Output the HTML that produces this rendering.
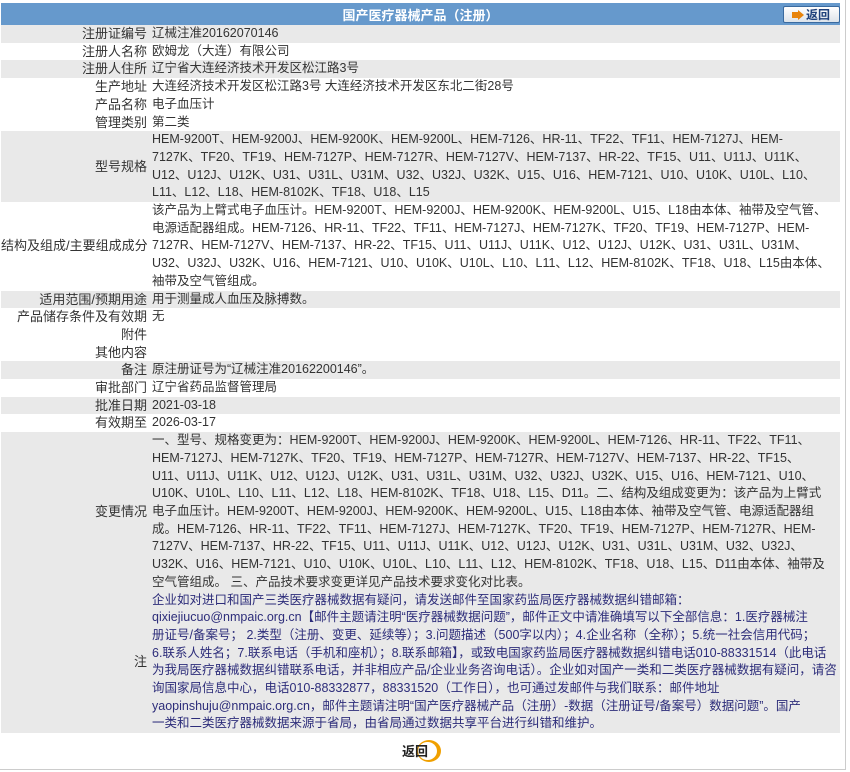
<!DOCTYPE html>
<html><head><meta charset="utf-8"><style>
body{margin:0;background:#fff;width:850px;height:772px;overflow:hidden;position:relative;font-family:"Liberation Sans","Noto Sans CJK SC",sans-serif;font-size:12.5px;color:#333}
.frame{position:absolute;left:0;top:0;width:845px;height:769px;border-right:1px solid #ccc;border-bottom:1px solid #ccc}
table{position:absolute;left:1px;top:3px;width:839px;border-collapse:collapse;table-layout:fixed}
th{background:#6699cc;color:#fff;height:22px;font-size:13px;font-weight:bold;position:relative;padding:0}
td{padding:0;line-height:17.7px;vertical-align:middle;white-space:nowrap;overflow:hidden}
td.l{text-align:right;padding-right:5px;font-size:13px}
tr.g td{background:#e9e9e9}
.n{color:#2d2d7a}
.btn{position:absolute;right:0;top:3px;width:57px;height:17px;border:1px solid #3a6a9f;border-radius:2px;background:linear-gradient(#fff,#dde3ea);color:#1d3f7a;font-size:12px;font-weight:bold;line-height:17px;text-align:right;padding-right:9px;box-sizing:border-box}
.btn:before{content:"";position:absolute;left:8px;top:5px;width:6px;height:6px;background:#e8840c}
.btn:after{content:"";position:absolute;left:14px;top:3px;border-left:6px solid #e8840c;border-top:5px solid transparent;border-bottom:5px solid transparent}
.ret{position:absolute;left:402px;top:741px;font-weight:bold;font-size:13px;color:#222}
.ret .c{position:absolute;left:15px;top:-1px;width:24px;height:22px;border-radius:50%;background:#f0a000}
.ret .c2{position:absolute;left:16px;top:1px;width:19px;height:18px;border-radius:50%;background:#fff}
.ret span{position:relative}
</style></head><body>
<div class="frame"></div>
<table>
<colgroup><col style="width:151px"><col style="width:688px"></colgroup>
<tr><th colspan="2">国产医疗器械产品（注册）<div class="btn">返回</div></th></tr>
<tr class="g"><td class="l">注册证编号</td><td>辽械注准20162070146</td></tr>
<tr><td class="l">注册人名称</td><td>欧姆龙（大连）有限公司</td></tr>
<tr class="g"><td class="l">注册人住所</td><td>辽宁省大连经济技术开发区松江路3号</td></tr>
<tr><td class="l">生产地址</td><td>大连经济技术开发区松江路3号 大连经济技术开发区东北二街28号</td></tr>
<tr><td class="l">产品名称</td><td>电子血压计</td></tr>
<tr><td class="l">管理类别</td><td>第二类</td></tr>
<tr class="g"><td class="l">型号规格</td><td>HEM-9200T、HEM-9200J、HEM-9200K、HEM-9200L、HEM-7126、HR-11、TF22、TF11、HEM-7127J、HEM-<br>7127K、TF20、TF19、HEM-7127P、HEM-7127R、HEM-7127V、HEM-7137、HR-22、TF15、U11、U11J、U11K、<br>U12、U12J、U12K、U31、U31L、U31M、U32、U32J、U32K、U15、U16、HEM-7121、U10、U10K、U10L、L10、<br>L11、L12、L18、HEM-8102K、TF18、U18、L15</td></tr>
<tr><td class="l">结构及组成/主要组成成分</td><td>该产品为上臂式电子血压计。HEM-9200T、HEM-9200J、HEM-9200K、HEM-9200L、U15、L18由本体、袖带及空气管、<br>电源适配器组成。HEM-7126、HR-11、TF22、TF11、HEM-7127J、HEM-7127K、TF20、TF19、HEM-7127P、HEM-<br>7127R、HEM-7127V、HEM-7137、HR-22、TF15、U11、U11J、U11K、U12、U12J、U12K、U31、U31L、U31M、<br>U32、U32J、U32K、U16、HEM-7121、U10、U10K、U10L、L10、L11、L12、HEM-8102K、TF18、U18、L15由本体、<br>袖带及空气管组成。</td></tr>
<tr class="g"><td class="l">适用范围/预期用途</td><td>用于测量成人血压及脉搏数。</td></tr>
<tr><td class="l">产品储存条件及有效期</td><td>无</td></tr>
<tr><td class="l">附件</td><td></td></tr>
<tr><td class="l">其他内容</td><td></td></tr>
<tr class="g"><td class="l">备注</td><td>原注册证号为“辽械注准20162200146”。</td></tr>
<tr><td class="l">审批部门</td><td>辽宁省药品监督管理局</td></tr>
<tr class="g"><td class="l">批准日期</td><td>2021-03-18</td></tr>
<tr><td class="l">有效期至</td><td>2026-03-17</td></tr>
<tr class="g"><td class="l">变更情况</td><td>一、型号、规格变更为：HEM-9200T、HEM-9200J、HEM-9200K、HEM-9200L、HEM-7126、HR-11、TF22、TF11、<br>HEM-7127J、HEM-7127K、TF20、TF19、HEM-7127P、HEM-7127R、HEM-7127V、HEM-7137、HR-22、TF15、<br>U11、U11J、U11K、U12、U12J、U12K、U31、U31L、U31M、U32、U32J、U32K、U15、U16、HEM-7121、U10、<br>U10K、U10L、L10、L11、L12、L18、HEM-8102K、TF18、U18、L15、D11。二、结构及组成变更为：该产品为上臂式<br>电子血压计。HEM-9200T、HEM-9200J、HEM-9200K、HEM-9200L、U15、L18由本体、袖带及空气管、电源适配器组<br>成。HEM-7126、HR-11、TF22、TF11、HEM-7127J、HEM-7127K、TF20、TF19、HEM-7127P、HEM-7127R、HEM-<br>7127V、HEM-7137、HR-22、TF15、U11、U11J、U11K、U12、U12J、U12K、U31、U31L、U31M、U32、U32J、<br>U32K、U16、HEM-7121、U10、U10K、U10L、L10、L11、L12、HEM-8102K、TF18、U18、L15、D11由本体、袖带及<br>空气管组成。 三、产品技术要求变更详见产品技术要求变化对比表。</td></tr>
<tr class="g"><td class="l">注</td><td class="n">企业如对进口和国产三类医疗器械数据有疑问，请发送邮件至国家药监局医疗器械数据纠错邮箱：<br>qixiejiucuo@nmpaic.org.cn【邮件主题请注明“医疗器械数据问题”，邮件正文中请准确填写以下全部信息：1.医疗器械注<br>册证号/备案号； 2.类型（注册、变更、延续等）；3.问题描述（500字以内）；4.企业名称（全称）；5.统一社会信用代码；<br>6.联系人姓名；7.联系电话（手机和座机）；8.联系邮箱】，或致电国家药监局医疗器械数据纠错电话010-88331514（此电话<br>为我局医疗器械数据纠错联系电话，并非相应产品/企业业务咨询电话）。企业如对国产一类和二类医疗器械数据有疑问，请咨<br>询国家局信息中心，电话010-88332877，88331520（工作日），也可通过发邮件与我们联系：邮件地址<br>yaopinshuju@nmpaic.org.cn，邮件主题请注明“国产医疗器械产品（注册）-数据（注册证号/备案号）数据问题”。国产<br>一类和二类医疗器械数据来源于省局，由省局通过数据共享平台进行纠错和维护。</td></tr>
</table>
<div class="ret"><div class="c"></div><div class="c2"></div><span>返回</span></div>
</body></html>
